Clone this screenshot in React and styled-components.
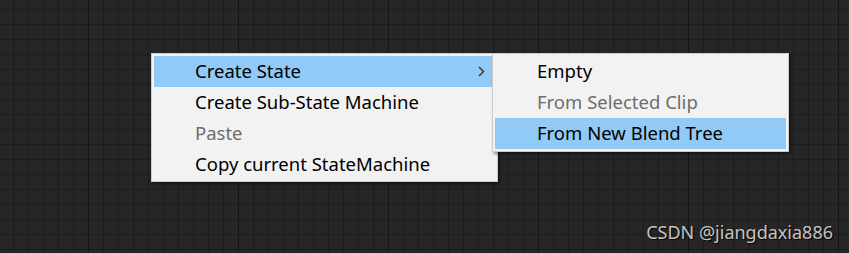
import React from "react";
import styled, { createGlobalStyle } from "styled-components";

const Global = createGlobalStyle`
  html, body { margin: 0; padding: 0; background: #262626; }
  body { font-family: "Noto Sans", "Liberation Sans", sans-serif; }
`;

const Canvas = styled.div`
  position: relative;
  width: 849px;
  height: 253px;
  overflow: hidden;
  background-color: #262626;
  background-image:
    linear-gradient(to right, #151515 0 1px, transparent 1px),
    linear-gradient(to right, #1d1d1d 0 1px, transparent 1px),
    linear-gradient(to bottom, #1d1d1d 0 1px, transparent 1px);
  background-size: 150px 100%, 15px 100%, 100% 15px;
  background-position: 88px 0, 13px 0, 0 9px;
`;

/* context menu popup layer: menu + cascading submenu */
const MenuLayer = styled.div`
  position: absolute;
  left: 151px;
  top: 53px;
  display: flex;
  align-items: flex-start;
`;

const Menu = styled.ul`
  position: relative;
  z-index: ${(p) => p.$z ?? 1};
  width: ${(p) => p.$width}px;
  margin: 0 0 0 ${(p) => (p.$overlap ? -p.$overlap : 0)}px;
  box-sizing: border-box;
  padding: 2px 2px ${(p) => p.$padBottom ?? 2}px;
  list-style: none;
  background: #f2f2f2;
  border: 1px solid #cccccc;
  box-shadow: 2px 2px 3px rgba(0, 0, 0, 0.45);
`;

const Item = styled.li`
  display: flex;
  align-items: center;
  box-sizing: border-box;
  height: 31px;
  padding: 0 0 2px ${(p) => p.$indent}px;
  font-size: 18.5px;
  line-height: 29px;
  color: ${(p) => (p.$disabled ? "#6d6d6d" : "#000")};
  background: ${(p) => (p.$active ? "#91c9f7" : "transparent")};
  white-space: nowrap;
`;

const Label = styled.span`
  flex: 1;
`;

const Arrow = styled.svg`
  width: 7px;
  height: 11px;
  margin: 2px 10px 0 0;
`;

const Watermark = styled.div`
  position: absolute;
  right: 16px;
  bottom: 8px;
  font-family: "Noto Sans", "Liberation Sans", sans-serif;
  font-size: 18px;
  line-height: 26px;
  color: #c4c4c4;
  text-shadow: 1px 1px 1px #000;
  white-space: nowrap;
`;

const Chevron = () => (
  <Arrow viewBox="0 0 7 11">
    <polyline points="1,1 5.5,5.5 1,10" fill="none" stroke="#3a3a3a" strokeWidth="1.5" />
  </Arrow>
);

const mainItems = [
  { label: "Create State", active: true, sub: true },
  { label: "Create Sub-State Machine" },
  { label: "Paste", disabled: true },
  { label: "Copy current StateMachine" },
];

const subItems = [
  { label: "Empty" },
  { label: "From Selected Clip", disabled: true },
  { label: "From New Blend Tree", active: true },
];

export default function App() {
  return (
    <>
      <Global />
      <Canvas>
        <MenuLayer>
          <Menu $width={347} $padBottom={1}>
            {mainItems.map((it) => (
              <Item key={it.label} $indent={41} $active={it.active} $disabled={it.disabled}>
                <Label>{it.label}</Label>
                {it.sub && <Chevron />}
              </Item>
            ))}
          </Menu>
          <Menu $width={297} $overlap={6} $z={2}>
            {subItems.map((it) => (
              <Item key={it.label} $indent={42} $active={it.active} $disabled={it.disabled}>
                <Label>{it.label}</Label>
              </Item>
            ))}
          </Menu>
        </MenuLayer>
        <Watermark>CSDN @jiangdaxia886</Watermark>
      </Canvas>
    </>
  );
}
